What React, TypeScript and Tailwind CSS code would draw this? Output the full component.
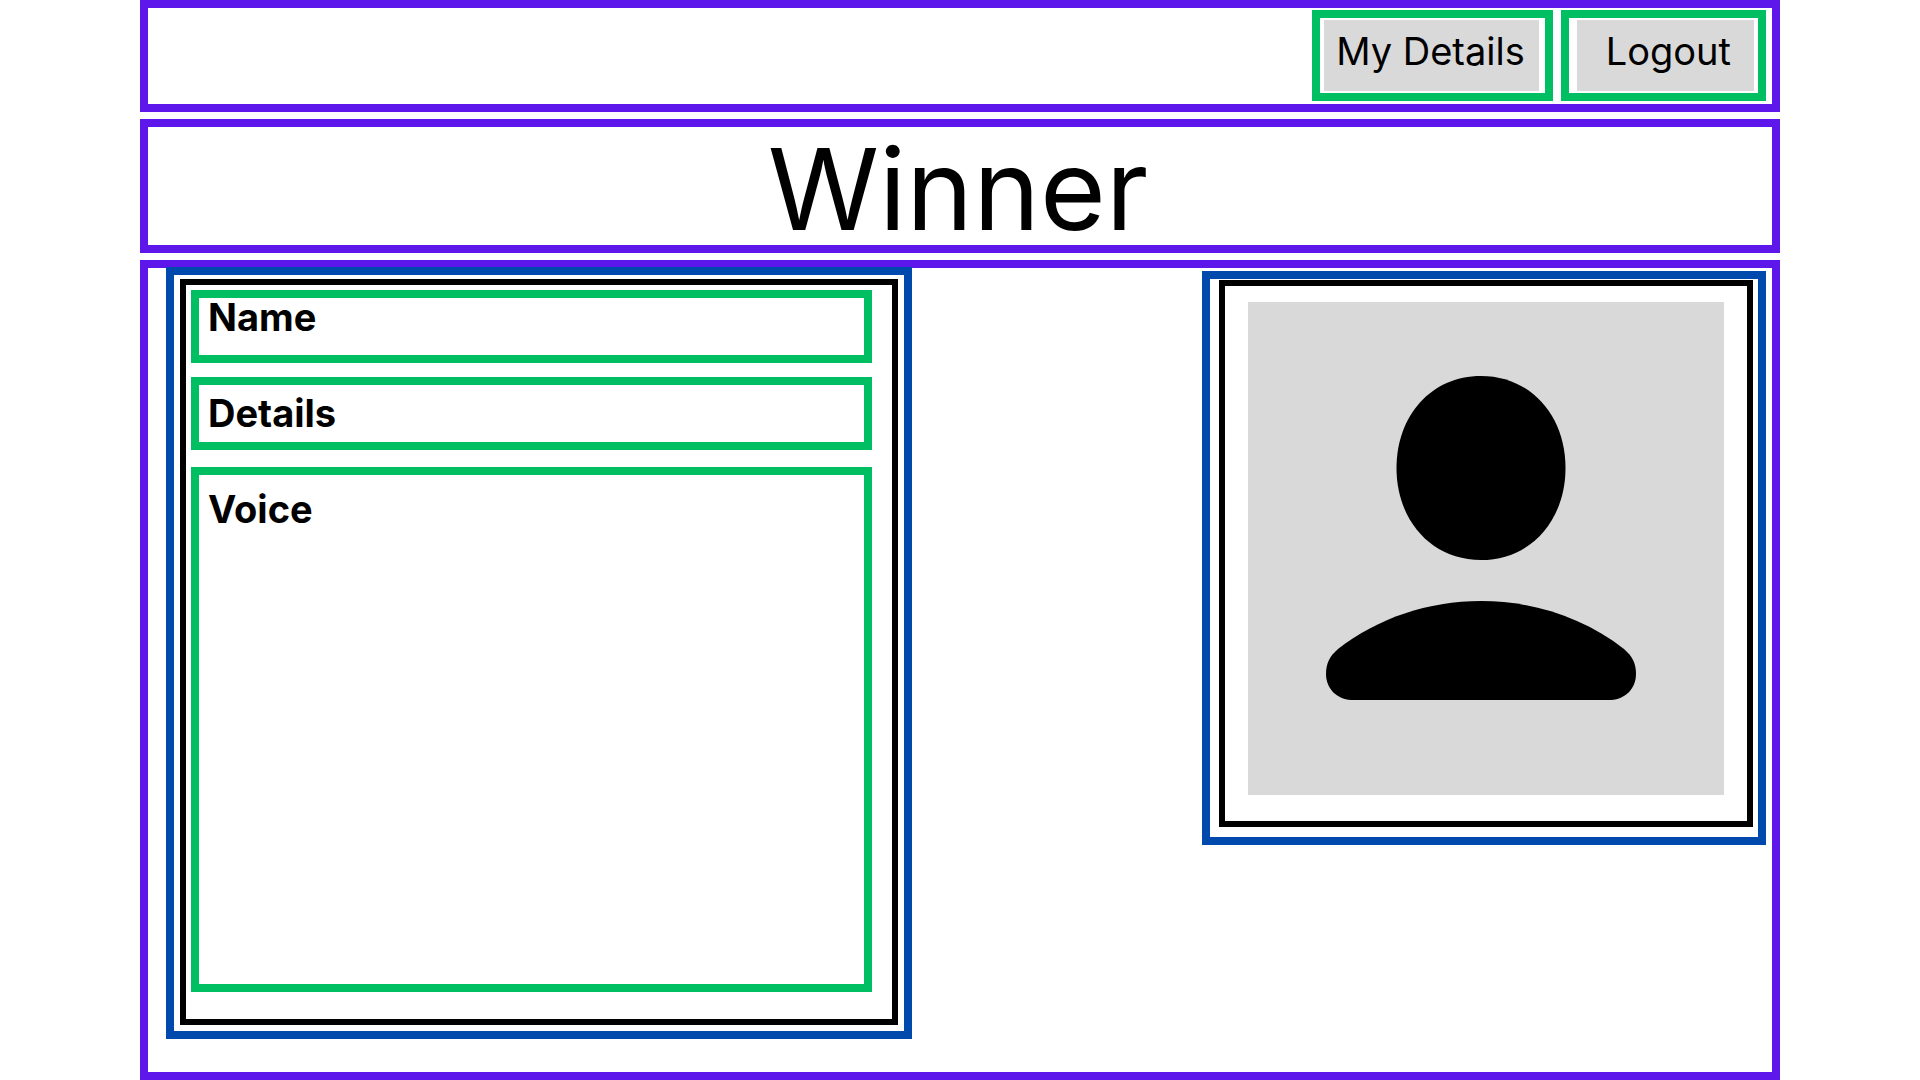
import type { ReactNode } from "react";

function Panel({ className = "", children }: { className?: string; children?: ReactNode }) {
  return <div className={`border-8 border-[#5e17eb] ${className}`}>{children}</div>;
}

function Field({ title, className }: { title: string; className: string }) {
  return (
    <section className={`border-8 border-[#00bf63] pl-[9px] ${className}`}>
      <h2 className="text-[38px] leading-[38px] font-bold">{title}</h2>
    </section>
  );
}

function Avatar() {
  return (
    <svg viewBox="0 0 476 493" className="block w-full bg-[#d9d9d9]" role="img" aria-label="Winner portrait">
      <path d="M233 74C283 74 317.500 114 317.500 166C317.500 218 283 258 233 258C183 258 148.500 218 148.500 166C148.500 114 183 74 233 74Z" />
      <path d="M103 398C88 397 78 386 78 372C78 361 82 354 90 347C130 316 180 299 233 299C286 299 336 316 376 347C384 354 388 361 388 372C388 386 378 397 363 398Z" />
    </svg>
  );
}

export default function App() {
  return (
    <div className="flex min-h-screen flex-col gap-[7px] bg-white px-[140px] font-['Inter',sans-serif] text-black">
      <Panel>
        <nav className="flex justify-end gap-2 pt-[2px] pr-[6px] pb-[3px]">
          <button type="button" className="border-8 border-[#00bf63] py-[2px] pr-[6px] pl-1 text-[38px] leading-[48px]">
            <span className="block bg-[#d9d9d9] pt-[7px] pr-[14px] pb-4 pl-3">My Details</span>
          </button>
          <button type="button" className="border-8 border-[#00bf63] py-[2px] pr-1 pl-2 text-[38px] leading-[48px]">
            <span className="block bg-[#d9d9d9] pt-[7px] pr-[23px] pb-4 pl-[29px]">Logout</span>
          </button>
        </nav>
      </Panel>
      <Panel>
        <h1 className="pt-[7px] pr-1 text-center text-[113px] leading-[111px]">Winner</h1>
      </Panel>
      <Panel className="flex-1 pr-[6px] pb-[33px] pl-[18px]">
        <main className="-mt-px grid grid-cols-[746fr_290fr_564fr] items-start">
          <div className="border-8 border-[#004aad] px-[6px] pt-1 pb-[6px]">
            <div className="flex flex-col border-6 border-black pt-[5px] pr-5 pb-[27px] pl-[5px]">
              <Field title="Name" className="min-h-[73px]" />
              <Field title="Details" className="mt-[14px] min-h-[73px] pt-[9px]" />
              <Field title="Voice" className="mt-[17px] min-h-[525px] pt-[15px]" />
            </div>
          </div>
          <div className="col-start-3 mt-1 border-8 border-[#004aad] pt-px pr-[5px] pb-[10px] pl-[9px]">
            <div className="border-6 border-black px-[23px] pt-4 pb-[26px]">
              <Avatar />
            </div>
          </div>
        </main>
      </Panel>
    </div>
  );
}
